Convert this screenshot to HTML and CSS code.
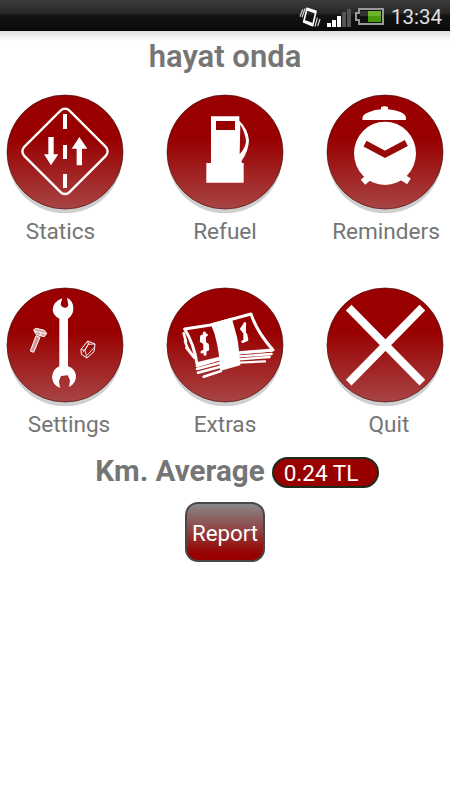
FILE: index.html
```
<!DOCTYPE html>
<html lang="en">
<head>
    <meta charset="UTF-8">
    <meta name="viewport" content="width=device-width, initial-scale=1.0">
    <title>hayat onda</title>
    <link rel="stylesheet" href="styles.css">
</head>
<body>
    <!-- shared button disc -->
    <svg class="defs" width="0" height="0">
        <defs>
            <linearGradient id="red" x1="0" y1="0" x2="0" y2="1">
                <stop offset="0" stop-color="#9a0000"></stop>
                <stop offset="0.38" stop-color="#980000"></stop>
                <stop offset="1" stop-color="#a94444"></stop>
            </linearGradient>
            <linearGradient id="shine" x1="0" y1="0" x2="0.5" y2="0.5">
                <stop offset="0.3" stop-color="#e88" stop-opacity="0.9"></stop>
                <stop offset="0.7" stop-color="#e88" stop-opacity="0"></stop>
            </linearGradient>
            <g id="disc">
                <ellipse cx="180" cy="187" rx="172" ry="171" fill="#cfcfcf"></ellipse>
                <ellipse cx="180" cy="174" rx="174" ry="171" fill="url(#red)" stroke="#4a1010" stroke-width="2"></ellipse>
                <path d="M14 150A168 166 0 0 1 150 9" fill="none" stroke="url(#shine)" stroke-width="3"></path>
            </g>
        </defs>
    </svg>

    <div class="status-bar">
        <svg class="vibrate" viewBox="0 0 66 66">
            <path d="M24 7L51 16L41 59L14 48Z" fill="none" stroke="#fff" stroke-width="5" stroke-linejoin="round"></path>
            <path d="M24 10L50 19M16 45L40 54" fill="none" stroke="#fff" stroke-width="7"></path>
            <path d="M11 10L3 32M18 7L9 34M55 35L48 62M63 39L56 60" fill="none" stroke="#ddd" stroke-width="3.5"></path>
        </svg>
        <svg class="signal" viewBox="0 0 24 20">
            <rect x="0" y="15" width="4" height="4" fill="#fff"></rect>
            <rect x="5" y="12" width="4" height="7" fill="#fff"></rect>
            <rect x="10" y="8" width="4" height="11" fill="#fff"></rect>
            <rect x="15" y="4" width="4" height="15" fill="#555"></rect>
            <rect x="20" y="1" width="4" height="18" fill="#555"></rect>
        </svg>
        <svg class="battery" viewBox="0 0 29 18">
            <path d="M4 1H28V16H4V12H1V5H4Z" fill="#111" stroke="#999" stroke-width="2"></path>
            <rect x="13" y="3" width="13" height="11" fill="#4b9a0c"></rect>
            <rect x="13" y="3" width="13" height="5" fill="#6db52c"></rect>
            <rect x="5" y="3" width="8" height="5" fill="#333"></rect>
        </svg>
        <span class="clock">13:34</span>
    </div>

    <h1 class="title">hayat onda</h1>

    <main class="menu">
        <a class="item statics">
            <svg class="item-icon" viewBox="0 0 360 360">
                <use href="#disc"></use>
                <rect x="84" y="76" width="192" height="192" rx="19" transform="rotate(45 180 172)" fill="none" stroke="#fff" stroke-width="7"></rect>
                <path d="M174 60h12v45h-12zM174 153h12v42h-12zM174 240h12v42h-12z" fill="#fff"></path>
                <path d="M130 129h16v52h14l-22 33l-21-33h13zM223 129l24 35h-16v50h-16v-50h-15z" fill="#fff"></path>
            </svg>
            <span class="label">Statics</span>
        </a>
        <a class="item refuel">
            <svg class="item-icon" viewBox="0 0 360 360">
                <use href="#disc"></use>
                <path d="M138 67H223V80Q250 106 252 140Q250 172 230 200V207H236V266H124V207H138Z" fill="#fff"></path>
                <rect x="153" y="81" width="57" height="27" fill="#980000"></rect>
                <path d="M226 91Q242 120 243 143Q241 161 224 181Z" fill="#9b0c0c"></path>
            </svg>
            <span class="label">Refuel</span>
        </a>
        <a class="item reminders">
            <svg class="item-icon" viewBox="0 0 360 360">
                <use href="#disc"></use>
                <ellipse cx="180" cy="178" rx="93" ry="95" fill="#fff"></ellipse>
                <path d="M140 242L114 265M220 242L252 262" stroke="#fff" stroke-width="20"></path>
                <path d="M112 78Q109 60 135 53Q150 47 168 46V39Q178 34 189 39V46Q211 48 226 54Q246 62 243 78Z" fill="#fff"></path>
                <path d="M120 149L180 181L244 147" fill="none" stroke="#980a0a" stroke-width="20"></path>
            </svg>
            <span class="label">Reminders</span>
        </a>
        <a class="item settings">
            <svg class="item-icon" viewBox="0 0 360 360">
                <use href="#disc"></use>
                <path d="M172 34Q144 44 143 69Q145 86 163 95V238Q143 246 141 270Q143 295 165 303L162 282L168 267L188 265L195 280L192 300Q214 290 213 265Q209 244 189 238V95Q205 85 205 64Q205 41 186 32L190 53Q189 63 179 62Q168 60 167 51Z" fill="#fff"></path>
                <g fill="none" stroke="#fff" stroke-width="3" stroke-linejoin="round">
                    <path d="M86 128L94 124L118 130L125 139L118 149L105 146L92 141Z" fill="#dba0a0"></path>
                    <path d="M88 132L108 137L122 140M108 137L105 146"></path>
                    <path d="M93 146L105 151L86 196L76 192Z" fill="#d79595"></path>
                    <path d="M228 187L248 162L270 171L267 194L246 213L229 202Z"></path>
                    <path d="M228 187L240 190L246 213M240 190L250 172L270 171M250 172L248 162M234 196L253 167M246 205L267 182" stroke-width="2.5"></path>
                </g>
            </svg>
            <span class="label">Settings</span>
        </a>
        <a class="item extras">
            <svg class="item-icon" viewBox="0 0 360 360">
                <use href="#disc"></use>
                <g fill="none" stroke="#fff" stroke-width="8" stroke-linecap="round" stroke-linejoin="round">
                    <path d="M59 126L137 114L258 81Q276 135 324 189L222 197L164 214L96 230Q87 172 59 126Z" stroke-width="9"></path>
                    <path d="M56 139L63 164M60 162Q66 185 82 203M64 182L88 212" stroke-width="8"></path>
                    <path d="M96 237L164 217M96 246L164 228M99 257L166 239M116 269L168 252"></path>
                    <path d="M222 199L320 191M222 208L320 201M222 217L314 210M222 227L300 223" stroke-width="7"></path>
                    <path d="M124 144L110 148L109 162L127 173L128 187L111 195M118 138L120 202" stroke-width="9"></path>
                    <path d="M240 110L229 126L243 143L246 158L233 164M239 110L239 160" stroke-width="8"></path>
                </g>
                <path d="M137 110L200 92L216 150Q222 180 226 235L165 252Q165 200 149 142Z" fill="#fff"></path>
            </svg>
            <span class="label">Extras</span>
        </a>
        <a class="item quit">
            <svg class="item-icon" viewBox="0 0 360 360">
                <use href="#disc"></use>
                <path d="M71 62L292 287M292 62L71 287" stroke="#fff" stroke-width="24"></path>
            </svg>
            <span class="label">Quit</span>
        </a>
    </main>

    <div class="average">
        <span class="average-label">Km. Average</span>
        <span class="average-value">0.24 TL</span>
    </div>
    <button class="report">Report</button>
</body>
</html>
```
FILE: styles.css
```
* {
    margin: 0;
    padding: 0;
    box-sizing: border-box;
    font-family: Roboto, sans-serif;
}

body {
    min-height: 100vh;
    background: linear-gradient(to bottom, #ddd 31px, #fff 41px);
    color: #757575;
    display: flex;
    flex-direction: column;
    align-items: center;
}

.defs {
    display: block;
}

.status-bar {
    width: 100%;
    height: 31px;
    padding-right: 8px;
    display: flex;
    align-items: center;
    justify-content: flex-end;
    background: linear-gradient(to bottom, #3c3c3c 0, #252525 14px, #131313 15px, #0a0a0a 30px, #000 31px);
}

.vibrate {
    width: 22px;
    height: 22px;
    margin: 3px 6px 0 0;
}

.signal {
    width: 24px;
    height: 20px;
    margin: 5px 4px 0 0;
}

.battery {
    width: 29px;
    height: 18px;
    margin: 3px 7px 0 0;
}

.clock {
    font-size: 20.5px;
    line-height: 31px;
    padding-top: 3px;
    color: #e0e0e0;
}

.title {
    height: 63px;
    padding-top: 7px;
    font-size: 31px;
    line-height: 38px;
    font-weight: 600;
}

.menu {
    width: 450px;
    padding: 0 5px;
    display: grid;
    grid-template-columns: repeat(3, 120px);
    grid-auto-rows: 192.5px;
    column-gap: 40px;
}

.item {
    display: flex;
    flex-direction: column;
    align-items: center;
}

.item-icon {
    width: 120px;
    height: 120px;
}

.label {
    font-size: 22.6px;
    line-height: 36px;
    white-space: nowrap;
}

.statics .label {
    margin-right: 9px;
}

.reminders .label {
    margin-left: 2px;
}

.settings .label,
.quit .label {
    margin-left: 8px;
}

.average {
    height: 31px;
    margin-top: -22px;
    padding-left: 24px;
    display: flex;
    align-items: center;
    gap: 7px;
}

.average-label {
    font-size: 29.6px;
    line-height: 29px;
    padding-bottom: 2px;
    font-weight: bold;
}

.average-value {
    width: 107px;
    height: 31px;
    padding-left: 10px;
    border: 2px solid #1d2b1d;
    border-radius: 16px;
    background: #980000;
    color: #fff;
    font-size: 22.6px;
    line-height: 30px;
}

.report {
    width: 80px;
    height: 60px;
    margin-top: 14px;
    padding-top: 2px;
    border: 2px solid #484848;
    border-radius: 13px;
    background: linear-gradient(to bottom, #888, #980000 90%);
    color: #fff;
    font-size: 22.3px;
}
```
